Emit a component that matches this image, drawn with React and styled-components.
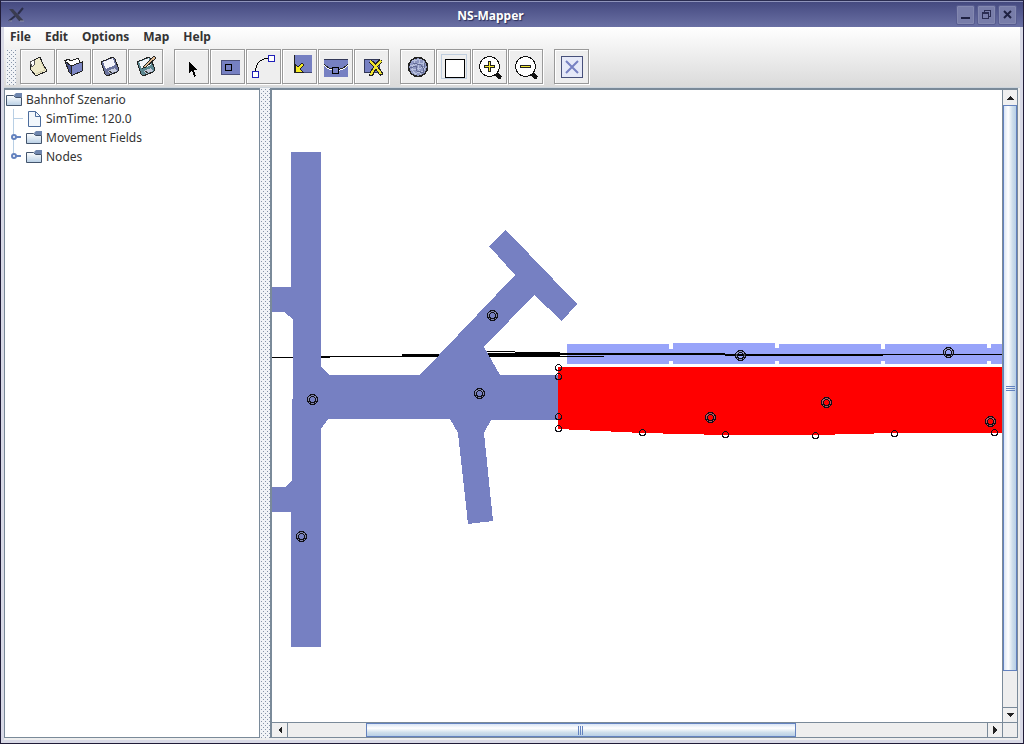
import React from "react";
import styled, { createGlobalStyle, css } from "styled-components";

const Global = createGlobalStyle`
  *, *::before, *::after { box-sizing: border-box; }
  html, body, #root { height: 100%; margin: 0; }
  body {
    font-family: "Noto Sans", "DejaVu Sans", sans-serif;
    font-size: 12px;
    color: #333;
    overflow: hidden;
  }
  button { font: inherit; color: inherit; }
  svg { display: block; flex: none; }
`;

const Frame = styled.div`
  display: flex;
  flex-direction: column;
  height: 100%;
  border: 1px solid #201c38;
  border-top-color: #2a2c50;
  background: #d8d9e6;
`;

const TitleBar = styled.header`
  display: flex;
  align-items: center;
  gap: 2px;
  height: 26px;
  padding: 0 6px 0 7px;
  border-top: 1px solid #8f94bb;
  background: linear-gradient(#454a80, #6a70a4);
`;

const Title = styled.h1`
  flex: 1;
  margin: 0;
  padding-top: 2px;
  text-align: center;
  font-size: 12px;
  line-height: 20px;
  font-weight: 700;
  color: #fff;
  text-shadow: 1px 1px 1px #2a2e58;
`;

const WindowButton = styled.button`
  display: grid;
  place-items: center;
  width: 19px;
  height: 20px;
  padding: 0;
  border: 1px solid #575c90;
  border-radius: 2px;
  background: #787da9;
  box-shadow: inset 0 0 0 1px #8388b0;
`;

const Body = styled.div`
  flex: 1;
  min-height: 0;
  display: flex;
  flex-direction: column;
  margin: 0 3px 3px;
  background: #eee;
`;

const Bars = styled.div`
  background: linear-gradient(#fff, #dadada);
  border-bottom: 1px solid #ccd4dc;
`;

const MenuBar = styled.nav`
  display: flex;
  gap: 2px;
  height: 19px;
`;

const MenuButton = styled.button`
  padding: 0 6px;
  border: 0;
  background: none;
  font-weight: 700;
  line-height: 18px;
`;

const ToolBar = styled.div`
  display: flex;
  align-items: center;
  height: 41px;
  padding-left: 2px;
`;

const dots = css`
  background-color: #f1f3f6;
  background-image: radial-gradient(circle at 0 0, #8794a8 1px, transparent 1px),
    radial-gradient(circle at 0 0, #8794a8 1px, transparent 1px);
  background-size: 4px 4px;
  background-position: 1px 1px, 3px 3px;
`;

const Grip = styled.div`
  width: 10px;
  height: 36px;
  margin-right: 4px;
  ${dots}
`;

const ToolGroup = styled.div`
  display: flex;
  gap: 1px;
  margin-right: 11px;
`;

const ToolButton = styled.button`
  display: grid;
  place-items: center;
  width: 35px;
  height: 35px;
  padding: 0;
  border: 1px solid #999;
  background: #eee;
  box-shadow: inset 1px 1px #fff, 1px 1px #fff;
`;

const Split = styled.main`
  flex: 1;
  min-height: 0;
  display: grid;
  grid-template-columns: 256px 10px minmax(0, 1fr);
  padding: 0 2px 2px 0;
`;

const TreePane = styled.section`
  border: 1px solid #7a8a99;
  border-top-width: 2px;
  background: #fff;
`;

const Divider = styled.div`
  ${dots}
`;

const TreeList = styled.ul`
  margin: 0;
  padding: 0;
  list-style: none;
`;

const TreeRow = styled.li`
  display: flex;
  align-items: center;
  height: 19px;
  padding-left: ${(p) => (p.$root ? 1 : 5)}px;
`;

const Label = styled.span`
  padding-left: 4px;
  line-height: 18px;
`;

const MapPane = styled.section`
  display: grid;
  grid-template-columns: minmax(0, 1fr) 15px;
  grid-template-rows: minmax(0, 1fr) 15px;
  border: 1px solid #7a8a99;
  border-top-width: 2px;
  border-left-width: 2px;
  background: #eee;
`;

const MapView = styled.div`
  min-width: 0;
  background: #fff;
  overflow: hidden;
`;

const Scroll = styled.div`
  display: flex;
  flex-direction: ${(p) => (p.$vertical ? "column" : "row")};
  border: 0 solid #7a8a99;
  border-width: ${(p) => (p.$vertical ? "0 0 0 1px" : "1px 0 0 0")};
  background: #eee;
`;

const ScrollButton = styled.button`
  display: grid;
  place-items: center;
  flex: 0 0 ${(p) => p.$size}px;
  padding: 0;
  border: 0 solid #7a8a99;
  border-width: ${(p) => p.$edges};
  background: #f0f0f0;
`;

const Track = styled.div`
  flex: ${(p) => p.$grow} 1 0;
`;

const Thumb = styled.div`
  flex: ${(p) => p.$grow} 1 0;
  display: grid;
  place-items: center;
  border: 1px solid #6382bf;
  background: linear-gradient(
    ${(p) => (p.$vertical ? "to right" : "to bottom")},
    #d8e4f4, #fff 35%, #cfdfec 70%, #b8cfe5
  );
`;

const Corner = styled.div`
  border: 1px solid #7a8a99;
  border-width: 1px 0 0 1px;
`;

const Icon = ({ children, size = 29 }) => (
  <svg width={size} height={size} viewBox={`0 0 ${size} ${size}`} shapeRendering="crispEdges" aria-hidden="true">
    {children}
  </svg>
);

const NewIcon = () => (
  <Icon>
    <path d="M7 10L17 5L19 10L24 19L13 24L8 18Z" fill="#eeeacb" stroke="#222" />
    <path d="M7 10L11 8L12 12L9 15Z" fill="#fff" stroke="#555" />
    <path d="M13 22L22 18L18 10" fill="none" stroke="#d6d0ab" />
  </Icon>
);
const OpenIcon = () => (
  <Icon>
    <path d="M6 9L9 7L12 9L19 6L21 10L13 19Z" fill="#fff" stroke="#222" />
    <path d="M6 9L12 14L13 23L10 20Z" fill="#4e5791" stroke="#222" />
    <path d="M12 14L24 9.500L23 19L13 23.500Z" fill="#7c86c4" stroke="#222" />
  </Icon>
);
const Floppy = ({ fill = "#6b739d" }) => (
  <>
    <path d="M6 10L18 5L20 7L24 18L22 20L12 24L10 22Z" fill={fill} stroke="#222" />
    <path d="M8 10L18 6L20 13L11 17Z" fill="#f4f4fa" />
    <path d="M13 19L20 16L22 19L15 22Z" fill="#c5cbdc" />
    <path d="M15 19L16 21" stroke="#333" strokeWidth="2" />
  </>
);
const SaveIcon = () => <Icon><Floppy /></Icon>;
const SaveAsIcon = () => (
  <Icon>
    <Floppy fill="#5b8790" />
    <path d="M13 14L23 4L25 6L15 15L12 16Z" fill="#e3bd94" stroke="#222" />
  </Icon>
);
const SelectIcon = () => (
  <Icon>
    <path d="M12 10V21L15 18L17 25L19 24L17 18H21Z" fill="#000" />
  </Icon>
);
const AreaIcon = () => (
  <Icon>
    <rect x="8" y="8" width="19" height="15" fill="#7680c2" />
    <path d="M8.500 23V8.500H27M8 22.500H27" fill="none" stroke="#4b5079" />
    <rect x="12.500" y="12.500" width="6" height="6" fill="#7680c2" stroke="#000" />
  </Icon>
);
const CurveIcon = () => (
  <Icon>
    <path d="M6.500 19C7 11 12 6.500 19 6.500" fill="none" stroke="#000" />
    <rect x="3.500" y="19.500" width="6" height="6" fill="#fff" stroke="#2020b8" />
    <rect x="19.500" y="3.500" width="6" height="6" fill="#fff" stroke="#2020b8" />
  </Icon>
);
const CornerIcon = () => (
  <Icon>
    <rect x="9" y="3" width="18" height="18" fill="#7680c2" />
    <path d="M9.500 3V21" stroke="#222" />
    <path d="M10 20.500H27" stroke="#444a78" />
    <path d="M10 12V20H18L15 17L19 13L17 11L13 15Z" fill="#f6ec24" stroke="#222" />
  </Icon>
);
const SplitIcon = () => (
  <Icon>
    <rect x="3" y="7" width="24" height="18" fill="#7680c2" />
    <path d="M3 7.500H27" stroke="#333858" />
    <path d="M3 13C6 17 9 18 15 19C21 18 24 17 27 13" fill="none" stroke="#fff" />
    <path d="M3 12C6 16 9 17 15 18C21 17 24 16 27 12" fill="none" stroke="#222" />
    <rect x="11.500" y="15.500" width="6" height="6" fill="#7680c2" stroke="#000" />
  </Icon>
);
const DeleteIcon = () => (
  <Icon>
    <rect x="7.500" y="7.500" width="15" height="13" fill="#7680c2" stroke="#333858" />
    <path d="M13 9C18 13 21 17 25 23M24 8C20 13 15 18 14 24" fill="none" stroke="#222" strokeWidth="4" />
    <path d="M13 9C18 13 21 17 24 22M24 9C20 13 15 18 14 23" fill="none" stroke="#f1e52d" strokeWidth="2" />
  </Icon>
);
const GlobeIcon = () => (
  <Icon>
    <circle cx="15" cy="15" r="9.500" fill="#8f98c2" stroke="#222" strokeWidth="1.500" />
    <path d="M9 9L19 7M7 14L21 11M8 18L23 15M11 22L21 19M12 7L9 18L13 23M17 7L15 16L18 23M20 9L22 18" fill="none" stroke="#b9c2de" />
    <path d="M7 16L13 14L14 19L21 21M10 11L18 13L20 16M22 11L20 22" fill="none" stroke="#626a94" />
  </Icon>
);
const FrameIcon = () => (
  <Icon>
    <rect x="2.500" y="2.500" width="25" height="24" fill="#eee" stroke="#c0cede" />
    <rect x="6.500" y="7.500" width="19" height="18" fill="#fff" stroke="#000" />
  </Icon>
);
const ZoomIcon = ({ plus }) => (
  <Icon>
    <path d="M20 21L26 26" stroke="#111" strokeWidth="4" />
    <circle cx="14.500" cy="14.500" r="10" fill="#fff" stroke="#111" />
    <path d={plus ? "M14.500 9V20M9 14.500H20" : "M9 14.500H20"} stroke="#222" strokeWidth="3" />
    <path d={plus ? "M14.500 10V19M10 14.500H19" : "M10 14.500H19"} stroke="#f4e832" />
  </Icon>
);
const CloseIcon = () => (
  <Icon>
    <rect x="4.500" y="4.500" width="21" height="21" fill="#e6e9f8" stroke="#47507a" />
    <path d="M9 9L21 21M21 9L9 21" stroke="#7680c2" strokeWidth="2" shapeRendering="auto" />
  </Icon>
);

const FolderGlyph = () => (
  <svg width="16" height="14" viewBox="0 0 16 14" aria-hidden="true">
    <defs>
      <linearGradient id="folder" x2="0" y2="1">
        <stop offset="0" stopColor="#fff" />
        <stop offset="1" stopColor="#b8cfe5" />
      </linearGradient>
    </defs>
    <path d="M.5 12.500V2.500H7.500L9.500 4.500H15.500V12.500Z" fill="url(#folder)" stroke="#43546c" />
    <path d="M8 2L10 0H16V4H9Z" fill="#6f86ae" />
  </svg>
);
const FileGlyph = () => (
  <svg width="16" height="16" viewBox="0 0 16 16" aria-hidden="true">
    <path d="M2.500 .5H9.500L14.500 5.500V15.500H2.500Z" fill="#f2f7fc" stroke="#4c6c9c" />
    <path d="M9.500 .5V5.500H14.500" fill="none" stroke="#4c6c9c" />
  </svg>
);
const Branch = ({ handle, last }) => (
  <svg width="16" height="19" viewBox="0 0 16 19" aria-hidden="true">
    <path d={last ? "M3.500 0V9" : "M3.500 0V19"} stroke="#b8cfe5" />
    {handle ? (
      <>
        <path d="M6 9H11" stroke="#6382bf" strokeWidth="2" />
        <circle cx="4" cy="9" r="2" fill="#fff" stroke="#6382bf" strokeWidth="2" />
      </>
    ) : (
      <path d="M3 9.500H13" stroke="#b8cfe5" />
    )}
  </svg>
);

const Arrow = ({ d }) => (
  <svg width="10" height="10" viewBox="0 0 10 10" shapeRendering="crispEdges" aria-hidden="true">
    <path d={d} fill="#222" />
  </svg>
);

const AppMark = () => (
  <svg width="17" height="18" viewBox="0 0 17 18" aria-hidden="true">
    <path d="M1 3L5 3L16 15L11 15Z" fill="#3a3c50" />
    <path d="M15 2L10 8M7 10L1 15" stroke="#2c2f4a" strokeWidth="2" fill="none" />
    <path d="M12 15H16M1 15L4 15" stroke="#8d90a8" />
  </svg>
);

const rings = [
  [312, 399], [301, 536], [492, 315], [479, 393], [740, 355],
  [948, 352], [710, 417], [826, 402], [990, 421],
];
const corners = [
  [558, 367], [558, 376], [558, 416], [558, 428], [642, 432],
  [725, 434], [815, 435], [894, 433], [994, 432],
];
/* x, y, width, height of the overlapping radio links */
const links = [
  [272, 357, 58, 1], [321, 356, 239, 1], [402, 354, 158, 2],
  [484, 353, 241, 2], [487, 351, 28, 1], [515, 352, 45, 4],
  [560, 356, 44, 1], [725, 354, 158, 2], [883, 354, 127, 1],
];

const Station = () => (
  <svg width="100%" height="100%" role="img" aria-label="Bahnhof Szenario">
    <g transform="translate(-272 -90)" shapeRendering="crispEdges">
      <path
        d="M567 344H669V349H673V343H775V348H779V344H881V349H885V344H987V348H991V344H1010V364H991V361H987V364H885V361H881V364H779V361H775V364H673V361H669V364H567Z"
        fill="#98a4fa"
      />
      {links.map(([x, y, w, h]) => <rect key={`${x}-${y}`} x={x} y={y} width={w} height={h} />)}
      <path
        d="M291 152H321V367L329 375H420L515 275L489 246L506 230L577 304L562 321L534 295L484 347L500 375H558V420H491L484 433L493 521L468 524L458 433L450 419H328L321 429V647H291V512H265V487H285L292 480V399H293V319L284 312H265V287H291Z"
        fill="#7680c2"
      />
      <path d="M558 367H1010V433H894L815 435H725L642 433L558 429Z" fill="#f00" />
      <g fill="none" stroke="#101018">
        {rings.map(([x, y]) => (
          <g key={`${x}-${y}`} transform={`translate(${x + 0.5} ${y + 0.5})`}>
            <circle r="4" stroke="#8b8b9c" strokeOpacity=".6" />
            <circle r="5" />
            <circle r="3" />
          </g>
        ))}
        {corners.map(([x, y]) => <circle key={`${x}-${y}`} cx={x + 0.5} cy={y + 0.5} r="3" />)}
      </g>
    </g>
  </svg>
);

const ZoomInIcon = () => <ZoomIcon plus />;

const toolGroups = [
  [["New", NewIcon], ["Open", OpenIcon], ["Save", SaveIcon], ["Save as", SaveAsIcon]],
  [["Select", SelectIcon], ["Area", AreaIcon], ["Curve", CurveIcon], ["Corner", CornerIcon], ["Split", SplitIcon], ["Delete", DeleteIcon]],
  [["Globe", GlobeIcon], ["Frame", FrameIcon], ["Zoom in", ZoomInIcon], ["Zoom out", ZoomIcon]],
  [["Close map", CloseIcon]],
];

export default function App() {
  return (
    <Frame>
      <Global />
      <TitleBar>
        <AppMark />
        <Title>NS-Mapper</Title>
        <WindowButton aria-label="Minimize"><Icon size={15}><path d="M3 11H12" stroke="#1f2142" strokeWidth="2" /></Icon></WindowButton>
        <WindowButton aria-label="Restore">
          <Icon size={15}><path d="M5.500 5V3.500H11.500V9.500H10M3.500 5.500H9.500V11.500H3.500ZM3 6H10" fill="none" stroke="#2b2d52" /></Icon>
        </WindowButton>
        <WindowButton aria-label="Close"><svg width="15" height="15"><path d="M4 4L11 11M11 4L4 11" stroke="#1f2142" strokeWidth="2" /></svg></WindowButton>
      </TitleBar>
      <Body>
        <Bars>
          <MenuBar>
            {["File", "Edit", "Options", "Map", "Help"].map((m) => <MenuButton key={m}>{m}</MenuButton>)}
          </MenuBar>
          <ToolBar>
            <Grip />
            {toolGroups.map((group, i) => (
              <ToolGroup key={i}>
                {group.map(([name, Glyph]) => <ToolButton key={name} aria-label={name}><Glyph /></ToolButton>)}
              </ToolGroup>
            ))}
          </ToolBar>
        </Bars>
        <Split>
          <TreePane>
            <TreeList>
              <TreeRow $root><FolderGlyph /><Label>Bahnhof Szenario</Label></TreeRow>
              <TreeRow><Branch /><FileGlyph /><Label>SimTime: 120.0</Label></TreeRow>
              <TreeRow><Branch handle /><FolderGlyph /><Label>Movement Fields</Label></TreeRow>
              <TreeRow><Branch handle last /><FolderGlyph /><Label>Nodes</Label></TreeRow>
            </TreeList>
          </TreePane>
          <Divider />
          <MapPane>
            <MapView><Station /></MapView>
            <Scroll $vertical>
              <ScrollButton aria-label="Scroll up" $size={15} $edges="0"><Arrow d="M1 7L5 3L9 7Z" /></ScrollButton>
              <Thumb $vertical $grow={566}>
                <Icon size={9}><path d="M0 2.500H9M0 4.500H9M0 6.500H9" stroke="#6382bf" /></Icon>
              </Thumb>
              <Track $grow={36} />
              <ScrollButton aria-label="Scroll down" $size={15} $edges="1px 0 0 0"><Arrow d="M1 3L5 7L9 3Z" /></ScrollButton>
            </Scroll>
            <Scroll>
              <ScrollButton aria-label="Scroll left" $size={16} $edges="0 1px 0 0"><Arrow d="M7 1L3 5L7 9Z" /></ScrollButton>
              <Track $grow={78} />
              <Thumb $grow={429}>
                <Icon size={9}><path d="M2.500 0V9M4.500 0V9M6.500 0V9" stroke="#6382bf" /></Icon>
              </Thumb>
              <Track $grow={192} />
              <ScrollButton aria-label="Scroll right" $size={15} $edges="0 0 0 1px"><Arrow d="M3 1L7 5L3 9Z" /></ScrollButton>
            </Scroll>
            <Corner />
          </MapPane>
        </Split>
      </Body>
    </Frame>
  );
}
